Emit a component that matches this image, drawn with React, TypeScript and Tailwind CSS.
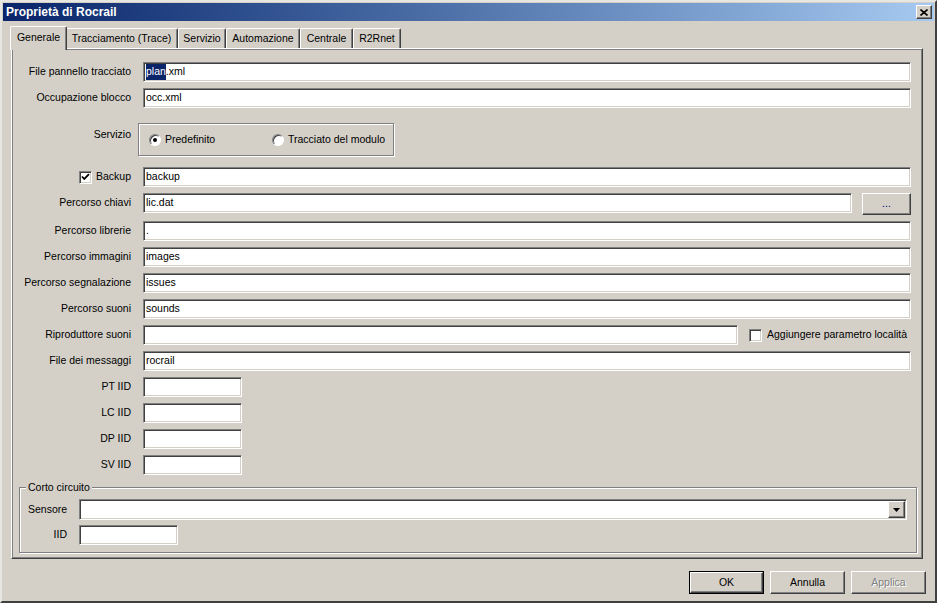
import React from "react";

const sunken =
  "border border-t-[#808080] border-l-[#808080] border-b-white border-r-white shadow-[inset_1px_1px_0_#404040,inset_-1px_-1px_0_#d4d0c8]";
const raised =
  "border border-t-white border-l-white border-b-[#404040] border-r-[#404040] shadow-[inset_-1px_-1px_0_#808080]";
const etched =
  "border border-[#808080] shadow-[1px_1px_0_#fff,inset_1px_1px_0_#fff]";

function Field({
  value,
  className = "",
  selected,
}: {
  value?: string;
  className?: string;
  selected?: string;
}) {
  return (
    <div
      className={`h-[20px] bg-white ${sunken} flex items-center pl-[2px] text-[10.5px] text-black overflow-hidden whitespace-nowrap ${className}`}
    >
      {selected && (
        <span className="bg-[#0a246a] text-white">{selected}</span>
      )}
      {value}
    </div>
  );
}

function Label({ children }: { children: React.ReactNode }) {
  return (
    <div className="w-[119px] shrink-0 text-right text-[10.5px] whitespace-nowrap">
      {children}
    </div>
  );
}

function Row({
  label,
  value,
  selected,
  short,
}: {
  label: string;
  value?: string;
  selected?: string;
  short?: boolean;
}) {
  return (
    <div className="flex items-center gap-[12px] h-[20px]">
      <Label>{label}</Label>
      <Field
        value={value}
        selected={selected}
        className={short ? "w-[99px] shrink-0" : "flex-1"}
      />
    </div>
  );
}

function CheckBox({ checked }: { checked?: boolean }) {
  return (
    <div
      className={`w-[13px] h-[13px] bg-white ${sunken} flex items-center justify-center shrink-0`}
    >
      {checked && (
        <svg width="9" height="9" viewBox="0 0 9 9">
          <path
            d="M1 3.5 L3.3 6 L8 1.2"
            stroke="#000"
            strokeWidth="1.8"
            fill="none"
          />
        </svg>
      )}
    </div>
  );
}

function Radio({ checked }: { checked?: boolean }) {
  return (
    <div className="w-[12px] h-[12px] rounded-full bg-white border border-t-[#808080] border-l-[#808080] border-b-white border-r-white shadow-[inset_1px_1px_0_#404040] flex items-center justify-center shrink-0">
      {checked && <div className="w-[4px] h-[4px] rounded-full bg-black" />}
    </div>
  );
}

function Tab({
  label,
  width,
  active,
}: {
  label: string;
  width: string;
  active?: boolean;
}) {
  return (
    <div
      className={`${width} flex items-center justify-center text-[10.5px] border-t border-l border-t-white border-l-white border-r border-r-[#404040] shadow-[inset_-1px_0_0_#808080] rounded-t-[2px] bg-[#d4d0c8] ${
        active ? "h-[24px] -mb-[2px] relative z-10 -mx-[2px] pb-[2px]" : "h-[20px]"
      }`}
    >
      {label}
    </div>
  );
}

function DialogButton({
  label,
  def,
  disabled,
}: {
  label: string;
  def?: boolean;
  disabled?: boolean;
}) {
  return (
    <div
      className={`w-[75px] h-[23px] ${def ? "border border-black" : ""}`}
    >
      <div
        className={`w-full h-full ${raised} flex items-center justify-center text-[10.5px] ${
          disabled ? "text-[#808080] [text-shadow:1px_1px_0_#fff]" : "text-black"
        }`}
      >
        {label}
      </div>
    </div>
  );
}

export default function App() {
  return (
    <div className="w-[937px] h-[603px] bg-[#d4d0c8] border-2 border-t-[#e8e6e0] border-l-[#e8e6e0] border-b-[#404040] border-r-[#404040] font-['Liberation_Sans',Arial,sans-serif] text-black overflow-hidden">
      {/* barra del titolo */}
      <div className="mx-[1px] mt-[1px] h-[18px] flex items-center justify-between pl-[3px] pr-[2px] bg-gradient-to-r from-[#0a246a] to-[#a6caf0]">
        <span className="text-white font-bold text-[12px]">
          Proprietà di Rocrail
        </span>
        <div
          className={`w-[16px] h-[14px] ${raised} bg-[#d4d0c8] flex items-center justify-center`}
        >
          <svg width="8" height="7" viewBox="0 0 8 7">
            <path
              d="M0.5 0.5 L7.5 6.5 M7.5 0.5 L0.5 6.5"
              stroke="#000"
              strokeWidth="1.6"
            />
          </svg>
        </div>
      </div>

      {/* schede */}
      <div className="mt-[5px] ml-[10px] h-[22px] flex items-end">
        <Tab label="Generale" width="w-[57px]" active />
        <Tab label="Tracciamento (Trace)" width="w-[113px]" />
        <Tab label="Servizio" width="w-[48px]" />
        <Tab label="Automazione" width="w-[74px]" />
        <Tab label="Centrale" width="w-[53px]" />
        <Tab label="R2Rnet" width="w-[48px]" />
      </div>

      {/* pannello */}
      <div className="ml-[9px] w-[912px] h-[511px] border border-t-white border-l-white border-b-[#404040] border-r-[#404040] shadow-[inset_1px_1px_0_#808080,inset_-1px_-1px_0_#808080] pt-[13px]">
        <div className="flex flex-col gap-[6px] pr-[11px]">
          <Row label="File pannello tracciato" selected="plan" value=".xml" />
          <Row label="Occupazione blocco" value="occ.xml" />

          <div className="flex gap-[7px] mt-[9px]">
            <div className="w-[119px] shrink-0 text-right text-[10.5px] pt-[4px]">
              Servizio
            </div>
            <div
              className={`w-[256px] h-[33px] ${etched} flex items-center text-[10.5px]`}
            >
              <div className="flex items-center gap-[4px] pl-[10px] w-[133px]">
                <Radio checked />
                <span>Predefinito</span>
              </div>
              <div className="flex items-center gap-[4px]">
                <Radio />
                <span>Tracciato del modulo</span>
              </div>
            </div>
          </div>

          <div className="flex items-center gap-[12px] h-[20px] mt-[5px]">
            <div className="w-[119px] shrink-0 flex items-center justify-end gap-[4px] text-[10.5px]">
              <CheckBox checked />
              <span>Backup</span>
            </div>
            <Field value="backup" className="flex-1" />
          </div>

          <div className="flex items-start gap-[12px] h-[22px]">
            <div className="w-[119px] shrink-0 text-right text-[10.5px] h-[20px] flex items-center justify-end">
              Percorso chiavi
            </div>
            <Field value="lic.dat" className="flex-1" />
            <div
              className={`w-[49px] h-[22px] shrink-0 ${raised} -ml-[2px] flex items-center justify-center text-[10.5px] text-[#000080]`}
            >
              ...
            </div>
          </div>

          <Row label="Percorso librerie" value="." />
          <Row label="Percorso immagini" value="images" />
          <Row label="Percorso segnalazione" value="issues" />
          <Row label="Percorso suoni" value="sounds" />

          <div className="flex items-center gap-[12px] h-[20px]">
            <Label>Riproduttore suoni</Label>
            <Field className="w-[595px] shrink-0" />
            <div className="flex items-center gap-[5px] text-[10.5px] ml-[-1px] whitespace-nowrap">
              <CheckBox />
              <span>Aggiungere parametro località</span>
            </div>
          </div>

          <Row label="File dei messaggi" value="rocrail" />
          <Row label="PT IID" short />
          <Row label="LC IID" short />
          <Row label="DP IID" short />
          <Row label="SV IID" short />
        </div>

        {/* gruppo corto circuito */}
        <div
          className={`relative mt-[12px] ml-[7px] mr-[5px] h-[66px] ${etched} pt-[11px] pl-[8px] pr-[9px]`}
        >
          <span className="absolute -top-[7px] left-[6px] px-[2px] bg-[#d4d0c8] text-[10.5px] leading-[13px]">
            Corto circuito
          </span>
          <div className="flex items-center gap-[12px] h-[21px]">
            <div className="w-[39px] shrink-0 text-right text-[10.5px]">
              Sensore
            </div>
            <div
              className={`flex-1 h-[21px] bg-white ${sunken} flex items-center justify-end pr-[1px]`}
            >
              <div
                className={`w-[17px] h-[17px] bg-[#d4d0c8] ${raised} flex items-center justify-center`}
              >
                <svg width="7" height="4" viewBox="0 0 7 4">
                  <path d="M0 0 H7 L3.5 4 Z" fill="#000" />
                </svg>
              </div>
            </div>
          </div>
          <div className="flex items-center gap-[12px] h-[20px] mt-[5px]">
            <div className="w-[39px] shrink-0 text-right text-[10.5px]">IID</div>
            <Field className="w-[99px] shrink-0" />
          </div>
        </div>
      </div>

      {/* pulsanti */}
      <div className="mt-[12px] pr-[9px] flex justify-end gap-[6px]">
        <DialogButton label="OK" def />
        <DialogButton label="Annulla" />
        <DialogButton label="Applica" disabled />
      </div>
    </div>
  );
}
